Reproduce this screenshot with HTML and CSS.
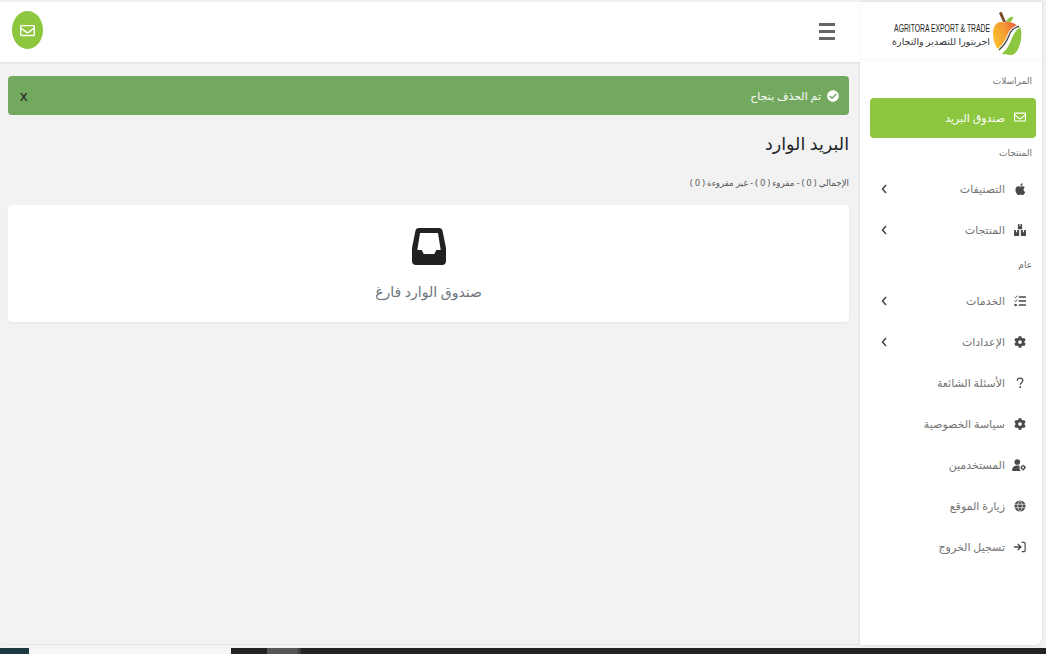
FILE: index.html
```html
<!DOCTYPE html>
<html lang="ar" dir="rtl">
<head>
<meta charset="UTF-8">
<title>البريد الوارد</title>
<link rel="stylesheet" href="styles.css">
</head>
<body>
<svg class="defs" width="0" height="0">
  <defs>
    <linearGradient id="apple-grad" x1="0" y1="0.7" x2="1" y2="0.2">
      <stop offset="0" stop-color="#fbc02d"/>
      <stop offset="0.55" stop-color="#f59a33"/>
      <stop offset="1" stop-color="#e8593a"/>
    </linearGradient>
  </defs>
  <symbol id="i-env" viewBox="0 0 512 512"><path d="M464 64H48C21.49 64 0 85.49 0 112v288c0 26.51 21.49 48 48 48h416c26.51 0 48-21.49 48-48V112c0-26.51-21.49-48-48-48zm0 48v40.805c-22.422 18.259-58.168 46.651-134.587 106.49-16.841 13.247-50.201 45.072-73.413 44.701-23.208.375-56.579-31.459-73.413-44.701C106.18 199.465 70.425 171.067 48 152.805V112h416zM48 400V214.398c22.914 18.251 55.409 43.862 104.938 82.646 21.857 17.205 60.134 55.186 103.062 54.955 42.717.231 80.509-37.199 103.053-54.947 49.528-38.783 82.032-64.401 104.947-82.653V400H48z"/></symbol>
  <symbol id="i-cog" viewBox="0 0 512 512"><path d="M487.4 315.7l-42.6-24.6c4.3-23.2 4.3-47 0-70.2l42.6-24.6c4.9-2.8 7.1-8.6 5.5-14-11.1-35.6-30-67.8-54.7-94.6-3.8-4.1-10-5.1-14.8-2.3L380.8 110c-17.9-15.4-38.5-27.3-60.8-35.1V25.8c0-5.6-3.9-10.5-9.4-11.7-36.7-8.2-74.3-7.8-109.2 0-5.5 1.2-9.4 6.1-9.4 11.7V75c-22.2 7.9-42.8 19.8-60.8 35.1L88.7 85.5c-4.9-2.8-11-1.9-14.8 2.3-24.7 26.7-43.6 58.9-54.7 94.6-1.7 5.4.6 11.2 5.5 14L67.3 221c-4.3 23.2-4.3 47 0 70.2l-42.6 24.6c-4.9 2.8-7.1 8.6-5.5 14 11.1 35.6 30 67.8 54.7 94.6 3.8 4.1 10 5.1 14.8 2.3l42.6-24.6c17.9 15.4 38.5 27.3 60.8 35.1v49.2c0 5.6 3.9 10.5 9.4 11.7 36.7 8.2 74.3 7.8 109.2 0 5.5-1.2 9.4-6.1 9.4-11.7v-49.2c22.2-7.9 42.8-19.8 60.8-35.1l42.6 24.6c4.9 2.8 11 1.9 14.8-2.3 24.7-26.7 43.6-58.9 54.7-94.6 1.5-5.5-.7-11.3-5.6-14.1zM256 336c-44.1 0-80-35.9-80-80s35.9-80 80-80 80 35.9 80 80-35.9 80-80 80z"/></symbol>
  <symbol id="i-chev" viewBox="0 0 6 10"><path d="M5 1 1.500 5 5 9" fill="none" stroke="currentColor" stroke-width="1.500"/></symbol>
</svg>

<div class="app">
  <aside class="sidebar">
    <div class="brand">
      <svg class="brand-apple" viewBox="0 0 30 44">
        <path d="M7 1l2.500-1.500L14 10h-3z" fill="#7a4a2a"/>
        <path d="M14 11c.5-3.500 3-6 7-6.500 0 4-2.500 6.500-7 6.500z" fill="#8dc63f"/>
        <path d="M12 10.500c-6-2-11 2-11 11 0 6 2 12 5 16 5-3 7-7 9-12 2-5 5-10 11-11-3-3.500-9-5.500-14-4z" fill="url(#apple-grad)"/>
        <path d="M28 15c2 4 2 12-1 20-2 5-5 8-8 8-2 0-3-.8-5-.8-1.500 0-2.500.3-4-.8 4-3 6.500-7 8.500-12 2-5 4-10 9.500-14.400z" fill="#8dc63f"/>
        <path d="M27 14.500c-5 .8-8 4-10 9-2 5.500-5 10-10 14.500" fill="none" stroke="#fff" stroke-width="3.400"/>
        <path d="M27 14.500c-5 .8-8 4-10 9-2 5.500-5 10-10 14.500" fill="none" stroke="#444" stroke-width="1.300"/>
      </svg>
      <div class="brand-text">
        <div class="brand-en">AGRITORA EXPORT &amp; TRADE</div>
        <div class="brand-ar">اجريتورا للتصدير والتجارة</div>
      </div>
    </div>

    <nav class="nav">
      <div class="nav-label nav-label-first">المراسلات</div>
      <a class="nav-item active">
        <svg class="nav-icon"><use href="#i-env"/></svg>
        <span>صندوق البريد</span>
      </a>

      <div class="nav-label">المنتجات</div>
      <a class="nav-item">
        <svg class="nav-icon" viewBox="60 60 340 400"><path d="M350 280c-1-50 41-74 43-75-24-35-60-39-73-40-31-3-61 18-76 18-16 0-40-18-66-17-34 0-65 20-83 50-35 61-9 151 26 200 17 24 37 51 63 50 25-1 35-16 65-16 31 0 40 16 66 16 27 0 45-24 61-49 19-28 27-55 28-57-1 0-53-20-54-80zM300 132c14-17 23-40 21-63-20 1-45 13-59 30-13 15-24 38-21 61 22 2 45-12 59-28z"/></svg>
        <span>التصنيفات</span>
        <svg class="chev"><use href="#i-chev"/></svg>
      </a>
      <a class="nav-item">
        <svg class="nav-icon" viewBox="0 0 14 14"><path d="M4.500 1a1 1 0 0 1 1-1h3a1 1 0 0 1 1 1v5h-5zM0 8a1 1 0 0 1 1-1h5v7H1a1 1 0 0 1-1-1zM8 7h5a1 1 0 0 1 1 1v5a1 1 0 0 1-1 1H8z"/><path d="M7 0v2.500M3 7v2.500M11 7v2.500" stroke="#fff" stroke-width="1.200"/></svg>
        <span>المنتجات</span>
        <svg class="chev"><use href="#i-chev"/></svg>
      </a>

      <div class="nav-label">عام</div>
      <a class="nav-item">
        <svg class="nav-icon" viewBox="0 0 14 14"><path d="M5.500 1.500H14v1.700H5.500zM5.500 6.200H14v1.700H5.500zM5.500 10.900H14v1.700H5.500z"/><path d="M.5 2l1.200 1.200L4 .8M.5 6.600l1.200 1.200 2.300-2.400" fill="none" stroke="currentColor" stroke-width="1.100"/><circle cx="1.900" cy="11.700" r="1.500"/></svg>
        <span>الخدمات</span>
        <svg class="chev"><use href="#i-chev"/></svg>
      </a>
      <a class="nav-item">
        <svg class="nav-icon"><use href="#i-cog"/></svg>
        <span>الإعدادات</span>
        <svg class="chev"><use href="#i-chev"/></svg>
      </a>
      <a class="nav-item">
        <svg class="nav-icon" viewBox="0 0 14 14"><path d="M3.800 4.500C3.800 2.500 5 1.200 7 1.200s3.300 1.200 3.300 3c0 2.400-3 2.500-3 4.800" fill="none" stroke="currentColor" stroke-width="1.500"/><rect x="6.300" y="10.800" width="2" height="2"/></svg>
        <span>الأسئلة الشائعة</span>
      </a>
      <a class="nav-item">
        <svg class="nav-icon"><use href="#i-cog"/></svg>
        <span>سياسة الخصوصية</span>
      </a>
      <a class="nav-item">
        <svg class="nav-icon nav-icon-wide" viewBox="0 0 16 14"><circle cx="6" cy="3.500" r="3.300"/><path d="M0 13c0-3.500 2.500-5.500 6-5.500 1 0 2 .2 2.800.5-.6 1.800-.2 4 1 6H1a1 1 0 0 1-1-1z"/><circle cx="12.800" cy="10" r="2" fill="none" stroke="currentColor" stroke-width="1.600"/><path d="M12.800 6.700v1.200M12.800 12.100v1.200M9.700 10h1M15 10h1" stroke="currentColor" stroke-width="1.200"/></svg>
        <span>المستخدمين</span>
      </a>
      <a class="nav-item">
        <svg class="nav-icon" viewBox="0 0 14 14"><circle cx="7" cy="7" r="6.500"/><path d="M.5 5h13M.5 9h13M7 .5c-3.500 4-3.500 9 0 13M7 .5c3.500 4 3.500 9 0 13" fill="none" stroke="#fff" stroke-width=".8"/></svg>
        <span>زيارة الموقع</span>
      </a>
      <a class="nav-item">
        <svg class="nav-icon" viewBox="0 0 14 14"><path d="M0 7h7M4.500 3.500 8 7l-3.500 3.500" fill="none" stroke="currentColor" stroke-width="1.700"/><path d="M9 1.500h2.500A1.500 1.500 0 0 1 13 3v8a1.500 1.500 0 0 1-1.500 1.500H9" fill="none" stroke="currentColor" stroke-width="1.400"/></svg>
        <span>تسجيل الخروج</span>
      </a>
    </nav>
  </aside>

  <main class="main">
    <header class="topbar">
      <button class="burger"><i></i><i></i><i></i></button>
      <a class="mail-btn"><svg class="mail-icon"><use href="#i-env"/></svg></a>
    </header>

    <div class="content">
      <div class="alert">
        <svg class="alert-icon" viewBox="0 0 512 512"><path d="M504 256c0 136.967-111.033 248-248 248S8 392.967 8 256 119.033 8 256 8s248 111.033 248 248zM227.314 387.314l184-184c6.248-6.248 6.248-16.379 0-22.627l-22.627-22.627c-6.248-6.249-16.379-6.249-22.628 0L216 308.118l-70.059-70.059c-6.248-6.248-16.379-6.248-22.628 0l-22.627 22.627c-6.248 6.248-6.248 16.379 0 22.627l104 104c6.249 6.249 16.379 6.249 22.628.001z"/></svg>
        <span class="alert-text">تم الحذف بنجاح</span>
        <span class="alert-close">x</span>
      </div>

      <h1 class="page-title">البريد الوارد</h1>
      <p class="counts">الإجمالي ( 0 ) - مقروء ( 0 ) - غير مقروءة ( 0 )</p>

      <div class="empty-card">
        <svg class="empty-icon" viewBox="0 0 34 37">
          <path fill-rule="evenodd" d="M7 0h20c2 0 3.200 1 3.600 3L34 20v13c0 2.500-1.500 4-4 4H4c-2.500 0-4-1.500-4-4V20L3.400 3C3.800 1 5 0 7 0zM8 5 5.300 22H9.700l2 4h10.600l2-4h4.400L26 5z"/>
        </svg>
        <div class="empty-text">صندوق الوارد فارغ</div>
      </div>
    </div>
  </main>
</div>

<div class="strip">
  <i class="s1"></i><i class="s2"></i><i class="s3"></i><i class="s4"></i><i class="s5"></i><i class="s6"></i>
</div>
</body>
</html>
```

FILE: styles.css
```css
* {
    box-sizing: border-box;
}

html, body {
    margin: 0;
    padding: 0;
    height: 654px;
    overflow: hidden;
}

body {
    font-family: "Noto Sans", "DejaVu Sans", sans-serif;
    background-color: #f2f2f2;
    color: #212529;
}

.defs {
    position: absolute;
}

.app {
    display: flex;
    height: 648px;
    padding: 2px 4px 3px 0;
}

/* sidebar, first child because of rtl */
.sidebar {
    width: 182px;
    background-color: #fff;
    border-radius: 0 0 8px 0;
    box-shadow: 0 0 3px rgba(0, 0, 0, 0.15);
}

.brand {
    height: 58px;
    display: flex;
    align-items: center;
    padding-right: 20px;
    gap: 2px;
    border-bottom: 1px solid #f7f7f7;
}

.brand-apple {
    width: 30px;
    height: 44px;
    flex: none;
    margin-top: 6px;
}

.brand-text {
    text-align: right;
    margin-top: 8px;
}

.brand-en {
    font-family: "Liberation Sans", sans-serif;
    font-size: 10px;
    line-height: 13px;
    color: #222;
    direction: ltr;
    white-space: nowrap;
    transform: scaleX(0.68);
    transform-origin: right;
}

.brand-ar {
    font-size: 9.5px;
    line-height: 13px;
    color: #333;
    white-space: nowrap;
}

.nav {
    padding: 6px 6px 0 10px;
}

.nav-label {
    height: 30px;
    line-height: 30px;
    font-size: 9px;
    color: #6f6f6f;
    padding-right: 4px;
}

.nav-label-first {
    margin-bottom: 2px;
}

.nav-item {
    height: 41px;
    display: flex;
    align-items: center;
    padding: 0 10px 0 11px;
    font-size: 11px;
    color: #737373;
    border-radius: 4px;
}

.nav-item span {
    flex: 1;
    margin-right: 9px;
}

.nav-item.active {
    height: 40px;
    padding-bottom: 2px;
    background-color: #8dc63f;
    color: #fff;
}

.nav-icon {
    width: 12px;
    height: 12px;
    flex: none;
    fill: #4a4a4a;
    color: #4a4a4a;
}

.nav-icon-wide {
    width: 14px;
    margin-left: -2px;
}

.nav-item.active .nav-icon {
    fill: #fff;
}

.chev {
    width: 6px;
    height: 10px;
    flex: none;
    color: #444;
}

.main {
    flex: 1;
    min-width: 0;
    border-bottom: 1px solid #e6e6e6;
    border-radius: 0 0 0 6px;
}

.topbar {
    height: 60px;
    background-color: #fff;
    display: flex;
    align-items: center;
    justify-content: space-between;
    padding: 0 25px 0 12px;
    box-shadow: 0 1px 2px rgba(0, 0, 0, 0.08);
}

.burger {
    width: 16px;
    padding: 0;
    border: 0;
    background: none;
    display: flex;
    flex-direction: column;
    gap: 4px;
    margin-top: -2px;
}

.burger i {
    display: block;
    height: 3px;
    background-color: #666;
}

.mail-btn {
    width: 31px;
    height: 38px;
    margin-top: -4px;
    border-radius: 50%;
    background-color: #8dc63f;
    display: flex;
    align-items: center;
    justify-content: center;
}

.mail-icon {
    width: 15px;
    height: 15px;
    fill: #fff;
}

.content {
    padding: 14px 11px 0 8px;
}

.alert {
    height: 39px;
    display: flex;
    align-items: center;
    padding: 0 10px 0 12px;
    background-color: #73a95f;
    border-radius: 4px;
    color: #fff;
    font-size: 11px;
}

.alert-icon {
    width: 12px;
    height: 12px;
    fill: #fff;
    flex: none;
    margin-left: 6px;
}

.alert-text {
    flex: 1;
}

.alert-close {
    font-family: "Liberation Sans", sans-serif;
    font-size: 15px;
    color: #222;
}

.page-title {
    margin: 13px 0 0;
    font-size: 17.5px;
    font-weight: 400;
    line-height: 30px;
    color: #212529;
}

.counts {
    margin: 18px 0 0;
    font-size: 8.7px;
    line-height: 14px;
    color: #555;
}

.empty-card {
    height: 117px;
    margin-top: 15px;
    padding-top: 23px;
    background-color: #fff;
    border-radius: 4px;
    text-align: center;
    box-shadow: 0 1px 2px rgba(0, 0, 0, 0.05);
}

.empty-icon {
    display: block;
    width: 34px;
    height: 37px;
    margin: 0 auto;
    fill: #212121;
}

.empty-text {
    margin-top: 15px;
    font-size: 14px;
    line-height: 24px;
    color: #6c757d;
}

.strip {
    display: flex;
    direction: ltr;
    height: 6px;
    background-color: #222;
}

.strip i {
    display: block;
}

.s1 { width: 29px; background-color: #1d3a44; }
.s2 { width: 202px; background-color: #f6f6f6; }
.s3 { width: 36px; background-color: #222; }
.s4 { width: 31px; background-color: #555; }
.s5 { width: 3px; background-color: #3c3c3c; }
.s6 { flex: 1; background-color: #222; }
```
